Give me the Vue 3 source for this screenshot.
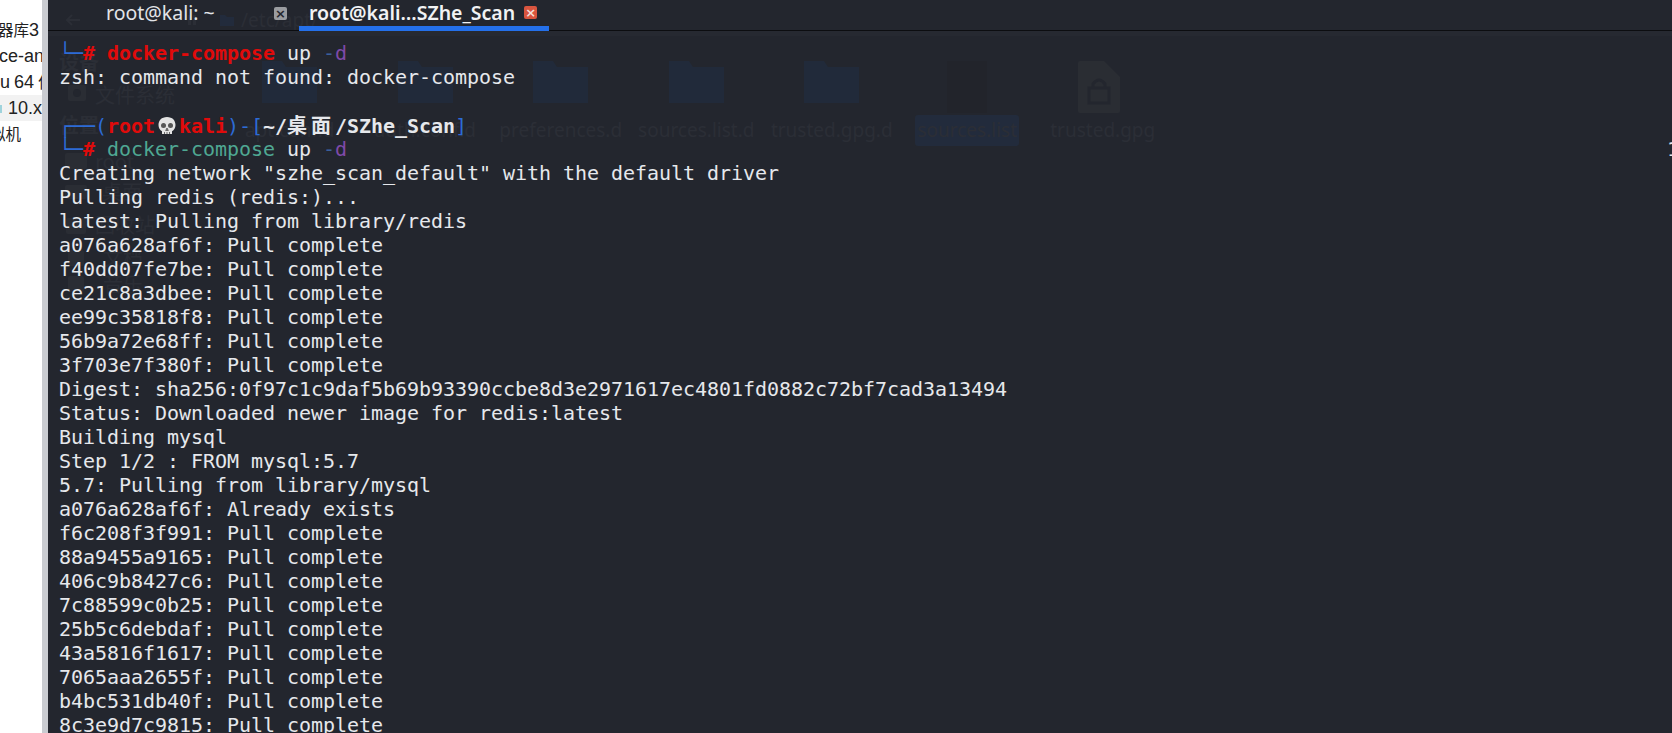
<script setup>
const pulls1 = ['a076a628af6f','f40dd07fe7be','ce21c8a3dbee','ee99c35818f8','56b9a72e68ff','3f703e7f380f']
const pulls2 = ['f6c208f3f991','88a9455a9165','406c9b8427c6','7c88599c0b25','25b5c6debdaf','43a5816f1617','7065aaa2655f','b4bc531db40f','8c3e9d7c9815']
const ghostFiles = [
  { name: 'apt.conf.d', kind: 'folder' },
  { name: 'auth.conf.d', kind: 'folder' },
  { name: 'preferences.d', kind: 'folder' },
  { name: 'sources.list.d', kind: 'folder' },
  { name: 'trusted.gpg.d', kind: 'folder' },
  { name: 'sources.list', kind: 'doc', selected: true },
  { name: 'trusted.gpg', kind: 'lock' }
]
</script>

<template>
  <div class="screen">
    <aside class="side">
      <div class="row r1"><span class="zh">器库</span>3</div>
      <div class="row r2">ce-an</div>
      <div class="row r3">u 64 <span class="zh">位</span></div>
      <div class="row r4"><i class="tip"></i>10.x</div>
      <div class="row r5"><span class="zh">拟机</span></div>
    </aside>
    <main class="term">
      <header class="tabs">
        <div class="tab first">
          <span class="tab-label">root@kali: ~</span>
          <span class="close grey">×</span>
        </div>
        <div class="tab active">
          <span class="tab-label">root@kali…SZhe_Scan</span>
          <span class="close red">×</span>
        </div>
      </header>

      <div class="ghost">
        <div class="gpath">
          <svg width="14" height="12" viewBox="0 0 14 12"><path d="M6 1 1 6l5 5M1 6h13" fill="none" stroke="#2b2e36" stroke-width="2"/></svg>
          <svg class="ghome" width="8" height="10" viewBox="0 0 8 10"><path d="M0 10V0h3v10zM5 10V0h3v10z" fill="#2b2e36"/></svg>
          <svg class="gfold" width="14" height="12" viewBox="0 0 14 12"><path d="M0 1h5l2 2h7v9H0z" fill="#222b3c"/></svg>
          <span>/etc/apt/</span>
        </div>
        <span class="g g1 head">设备</span>
        <i class="gbox b1"><i class="gdot"></i></i>
        <span class="g g2">文件系统</span>
        <span class="g g3 head">位置</span>
        <i class="gbox b2"></i>
        <span class="g g4">root</span>
        <i class="gbox b3"></i>
        <span class="g g5">桌面</span>
        <i class="gbox b4"></i>
        <span class="g g6">回收站</span>
        <i class="gbox b5"></i>
        <span class="g g7">文档</span>
        <i class="gbox b6"></i>
        <span class="g g8">音乐</span>
        <div class="gfiles">
          <div v-for="f in ghostFiles" :key="f.name" class="gfile">
            <svg v-if="f.kind === 'folder'" class="gicon" width="55" height="42" viewBox="0 0 55 42"><path d="M0 0h20l4 6h31v36H0z" fill="#212a3a"/></svg>
            <svg v-else-if="f.kind === 'doc'" class="gicon" width="40" height="52" viewBox="0 0 40 52"><rect width="40" height="52" fill="#22242b"/></svg>
            <svg v-else class="gicon lock" width="42" height="52" viewBox="0 0 42 52"><path d="M0 2q0-2 2-2h24l16 16v34q0 2-2 2H2q-2 0-2-2z" fill="#2a2d33"/><path d="M11 42V27h20v15zM15 27v-4q6-8 12 0v4" fill="none" stroke="#23262e" stroke-width="3"/></svg>
            <span class="gname" :class="{ sel: f.selected }">{{ f.name }}</span>
          </div>
        </div>
      </div>

      <div class="output">
        <div class="line"><span class="b">└─</span><span class="rb">#</span> <span class="rb">docker-compose</span> up <span class="dash">-</span><span class="pu">d</span></div>
        <div class="line">zsh: command not found: docker-compose</div>
        <div class="line">&nbsp;</div>
        <div class="line"><span class="b">┌──(</span><span class="rb">root</span><svg class="skull" width="24" height="24" viewBox="0 0 24 24"><path d="M12 3C6.500 3 3.500 6.600 3.500 11c0 3 1.400 5 3.500 6.200V20h10v-2.800c2.100-1.200 3.500-3.200 3.500-6.200C20.500 6.600 17.500 3 12 3z" fill="#e3e3e3"/><circle cx="8.500" cy="11.500" r="2.500" fill="#555"/><circle cx="15.500" cy="11.500" r="2.500" fill="#555"/><path d="M12 14l-1.300 2.500h2.600zM9.500 18v2M12 18v2M14.500 18v2" stroke="#666" fill="#666"/></svg><span class="rb">kali</span><span class="b">)-[</span><span class="wb">~/<span class="cjk">桌面</span>/SZhe_Scan</span><span class="b">]</span></div>
        <div class="line"><span class="b">└─</span><span class="rb">#</span> <span class="te">docker-compose</span> up <span class="dash">-</span><span class="pu">d</span></div>
        <div class="line">Creating network "szhe_scan_default" with the default driver</div>
        <div class="line">Pulling redis (redis:)...</div>
        <div class="line">latest: Pulling from library/redis</div>
        <div v-for="p in pulls1" :key="p" class="line">{{ p }}: Pull complete</div>
        <div class="line">Digest: sha256:0f97c1c9daf5b69b93390ccbe8d3e2971617ec4801fd0882c72bf7cad3a13494</div>
        <div class="line">Status: Downloaded newer image for redis:latest</div>
        <div class="line">Building mysql</div>
        <div class="line">Step 1/2 : FROM mysql:5.7</div>
        <div class="line">5.7: Pulling from library/mysql</div>
        <div class="line">a076a628af6f: Already exists</div>
        <div v-for="p in pulls2" :key="p" class="line">{{ p }}: Pull complete</div>
      </div>
      <span class="edge">1</span>
    </main>
  </div>
</template>

<style>
html, body { margin: 0; background: #fff; overflow: hidden; }
</style>

<style scoped>
.screen { display: flex; width: 1672px; height: 733px; overflow: hidden; }
.side {
  width: 42px; flex: none; background: #fff; border-right: 6px solid #c9cbd0;
  overflow: hidden; padding-top: 17px;
  font: 18px "Liberation Sans", "Noto Sans CJK SC", sans-serif; color: #222;
}
.row { height: 26px; line-height: 26px; white-space: nowrap; }
.zh { font: 15.500px "Noto Sans CJK SC", sans-serif; }
.r1 { margin-left: -2px; }
.r2 { margin-left: -1px; }
.r3 { word-spacing: -1px; }
.r4 { background: #f2f2f2; padding-left: 8px; position: relative; }
.tip { position: absolute; left: 0; top: 10px; width: 2px; height: 8px; background: #9fd3dc; }
.r5 { margin-left: -10px; }
.term {
  flex: 1; min-width: 0; position: relative; background: #23262e; color: #e6e8ec;
  overflow: hidden; font-family: "DejaVu Sans Mono", monospace;
}
.tabs {
  display: flex; height: 30px; border-bottom: 1px solid #0c0d10;
  box-shadow: 0 5px 0 #262931;
  position: relative; z-index: 1;
}
.tab { display: flex; align-items: center; position: relative; font: 19.500px "Noto Sans", sans-serif; box-sizing: border-box; }
.first { width: 251px; height: 30px; padding: 0 12px 6px 58px; justify-content: space-between; color: #e2e4e8; }
.active { width: 250px; height: 31px; padding: 0 0 2px 10px; font-weight: 600; color: #f1f2f4; border-bottom: 5px solid #2470ea; }
.tab-label { white-space: nowrap; }
.close { display: flex; width: 13px; height: 13px; align-items: center; justify-content: center; border-radius: 2px; font: bold 13px/13px "DejaVu Sans", sans-serif; flex: none; }
.grey { background: #9a9ca0; color: #23262e; margin-top: 2px; }
.red { background: #d9553f; color: #f4ded9; margin-left: 9px; }
.output { position: relative; padding: 10px 0 0 11px; }
.line { height: 24px; line-height: 24px; font-size: 20px; letter-spacing: -0.04px; white-space: pre; }
.b { color: #2d6bd6; }
.rb { color: #e00b0b; font-weight: 700; }
.dash { color: #3a5f9c; }
.pu { color: #7f4aa8; }
.te { color: #4fa893; }
.wb { color: #e6e8ec; font-weight: 700; }
.cjk { font-family: "Noto Sans CJK SC", sans-serif; font-size: 20px; letter-spacing: 4px; }
.skull { vertical-align: -5px; }
.edge { position: absolute; left: 1619px; top: 137px; font-size: 20px; line-height: 24px; }
.ghost { position: absolute; inset: 0; font-family: "Noto Sans CJK SC", "Noto Sans", sans-serif; color: #2b2e36; font-size: 20px; }
.gpath { position: absolute; left: 18px; top: 7px; display: flex; align-items: center; font: 19px "Noto Sans", sans-serif; white-space: nowrap; }
.ghome { margin-left: 108px; }
.gfold { margin-left: 24px; margin-right: 7px; }
.g { position: absolute; white-space: nowrap; }
.head { font-weight: 700; }
.g1 { left: 11px; top: 47px; }
.g2 { left: 47px; top: 80px; }
.g3 { left: 11px; top: 110px; }
.g4 { left: 47px; top: 146px; }
.g5 { left: 54px; top: 177px; }
.g6 { left: 47px; top: 210px; }
.g7 { left: 55px; top: 243px; }
.g8 { left: 55px; top: 269px; }
.gbox { position: absolute; background: #2a2d34; border-radius: 2px; display: block; }
.gdot { display: block; position: absolute; left: 5px; top: 4px; width: 8px; height: 8px; border-radius: 50%; background: #23262e; }
.b1 { left: 20px; top: 85px; width: 18px; height: 16px; }
.b2 { left: 17px; top: 153px; width: 22px; height: 16px; }
.b3 { left: 17px; top: 185px; width: 22px; height: 14px; }
.b4 { left: 18px; top: 218px; width: 20px; height: 16px; }
.b5 { left: 20px; top: 250px; width: 16px; height: 16px; }
.b6 { left: 20px; top: 276px; width: 16px; height: 16px; }
.gfiles { position: absolute; left: 174px; top: 61px; display: flex; }
.gfile { width: 135.500px; height: 84px; display: flex; flex-direction: column; align-items: center; position: relative; }
.gicon { flex: none; }
.lock { margin-left: -7px; }
.gname { position: absolute; top: 54px; padding: 2px 2px 3px; border-radius: 3px; font: 19px "Noto Sans", sans-serif; white-space: nowrap; color: #2b2e36; }
.sel { background: #222b3c; }
</style>
